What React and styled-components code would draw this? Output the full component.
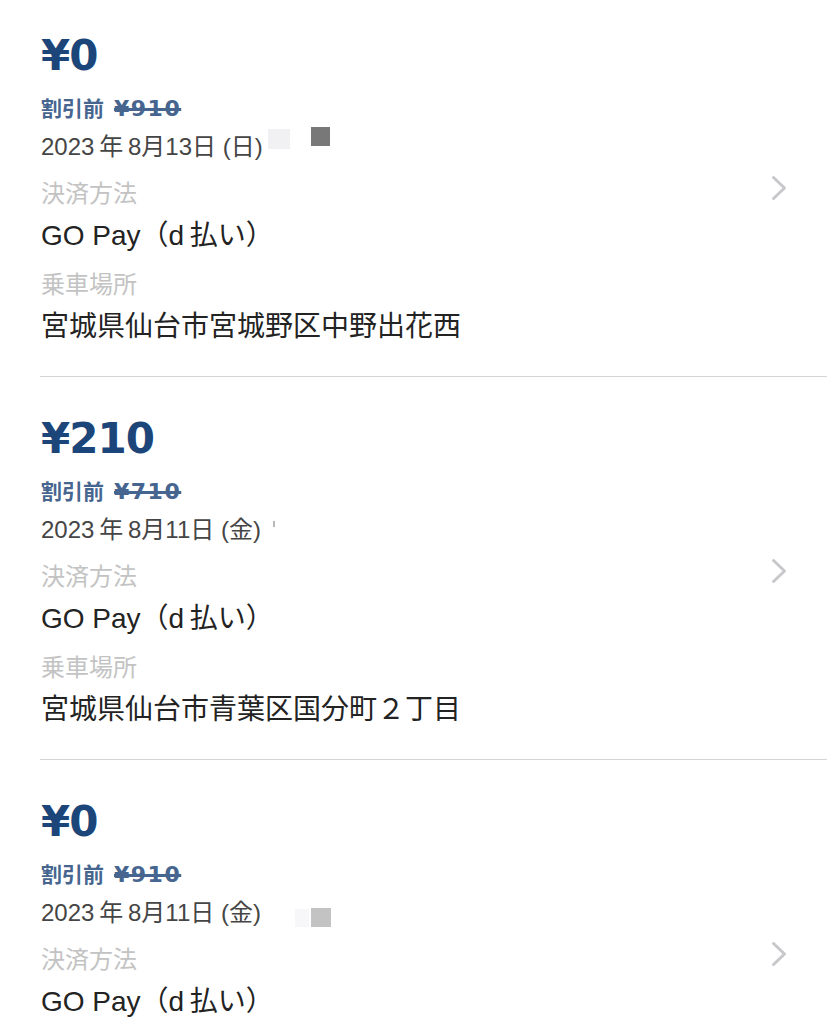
import React from 'react';
import styled, { createGlobalStyle } from 'styled-components';

const GlobalStyle = createGlobalStyle`
  html, body {
    margin: 0;
    padding: 0;
    background: #ffffff;
    overflow: hidden;
  }
  body {
    font-family: "Liberation Sans", "Noto Sans CJK JP", sans-serif;
    -webkit-font-smoothing: antialiased;
  }
`;

const colors = {
  price: '#1c4679',
  discount: '#46658f',
  date: '#454545',
  label: '#c3c3c3',
  value: '#232323',
  divider: '#d5d5d5',
  chevron: '#c8c8cc',
};

const List = styled.div`
  margin-top: -6px;
  display: flex;
  flex-direction: column;
`;

const Row = styled.div`
  margin-left: 40px;
  padding: 36px 39px 30px 1px;
  border-bottom: 1px solid ${colors.divider};
  display: flex;
  align-items: center;
`;

const Body = styled.div`
  flex: 1;
  display: flex;
  flex-direction: column;
`;

const Price = styled.div`
  font-family: "DejaVu Sans", "Noto Sans CJK JP", sans-serif;
  font-weight: bold;
  font-size: 42px;
  line-height: 52px;
  letter-spacing: -1px;
  color: ${colors.price};
`;

const Discount = styled.div`
  margin-top: 10px;
  height: 30px;
  line-height: 30px;
  font-size: 21px;
  font-weight: bold;
  color: ${colors.discount};
  font-family: "Noto Sans CJK JP", sans-serif;
`;

const Original = styled.span`
  margin-left: 10px;
  line-height: 1;
  font-size: 22px;
  font-family: "DejaVu Sans", sans-serif;
  letter-spacing: 1.5px;
  text-decoration: line-through;
  text-decoration-thickness: 2.5px;
`;

const DateLine = styled.div`
  margin-top: 8px;
  height: 34px;
  line-height: 34px;
  font-size: 24px;
  color: ${colors.date};
  display: flex;
  align-items: center;
`;

const Redact = styled.span`
  align-self: flex-start;
  display: inline-block;
  width: ${(p) => p.$w}px;
  height: ${(p) => p.$h}px;
  margin-left: ${(p) => p.$gap}px;
  margin-top: ${(p) => p.$top}px;
  background: ${(p) => p.$tone};
`;

const FieldLabel = styled.div`
  margin-top: 11px;
  height: 34px;
  line-height: 34px;
  font-size: 24px;
  color: ${colors.label};
  font-family: "Noto Sans CJK JP", sans-serif;
`;

const FieldValue = styled.div`
  margin-top: 8px;
  height: 38px;
  line-height: 38px;
  font-size: 28px;
  color: ${colors.value};
  white-space: nowrap;
`;

const Chevron = styled.svg`
  flex: none;
  width: 17px;
  height: 26px;
  fill: none;
  stroke: ${colors.chevron};
  stroke-width: 3px;
  stroke-linecap: round;
  stroke-linejoin: round;
`;

const rides = [
  {
    price: '¥0',
    original: '¥910',
    date: '2023\u2009年\u20098月13日 (日)',
    marks: [
      { w: 22, h: 20, gap: 5, top: -1, tone: '#f1f1f3' },
      { w: 19, h: 19, gap: 21, top: -3, tone: '#787878' },
    ],
    payment: 'GO Pay（d\u2009払い）',
    place: '宮城県仙台市宮城野区中野出花西',
  },
  {
    price: '¥210',
    original: '¥710',
    date: '2023\u2009年\u20098月11日 (金)',
    marks: [{ w: 2, h: 6, gap: 12, top: 8, tone: '#b8b8b8' }],
    payment: 'GO Pay（d\u2009払い）',
    place: '宮城県仙台市青葉区国分町２丁目',
  },
  {
    price: '¥0',
    original: '¥910',
    date: '2023\u2009年\u20098月11日 (金)',
    marks: [
      { w: 14, h: 18, gap: 34, top: 13, tone: '#f7f7f9' },
      { w: 20, h: 19, gap: 2, top: 12, tone: '#c3c3c3' },
    ],
    payment: 'GO Pay（d\u2009払い）',
    place: '宮城県仙台市宮城野区中野出花西',
  },
];

export default function App() {
  return (
    <>
      <GlobalStyle />
      <List>
        {rides.map((r, i) => (
          <Row key={i}>
            <Body>
              <Price>{r.price}</Price>
              <Discount>
                割引前<Original>{r.original}</Original>
              </Discount>
              <DateLine>
                <span>{r.date}</span>
                {r.marks.map((m, j) => (
                  <Redact key={j} $w={m.w} $h={m.h} $gap={m.gap} $top={m.top} $tone={m.tone} />
                ))}
              </DateLine>
              <FieldLabel>決済方法</FieldLabel>
              <FieldValue>{r.payment}</FieldValue>
              <FieldLabel>乗車場所</FieldLabel>
              <FieldValue>{r.place}</FieldValue>
            </Body>
            <Chevron viewBox="0 0 17 26">
              <polyline points="2.5,2.5 13.5,13 2.5,23.5" />
            </Chevron>
          </Row>
        ))}
      </List>
    </>
  );
}
